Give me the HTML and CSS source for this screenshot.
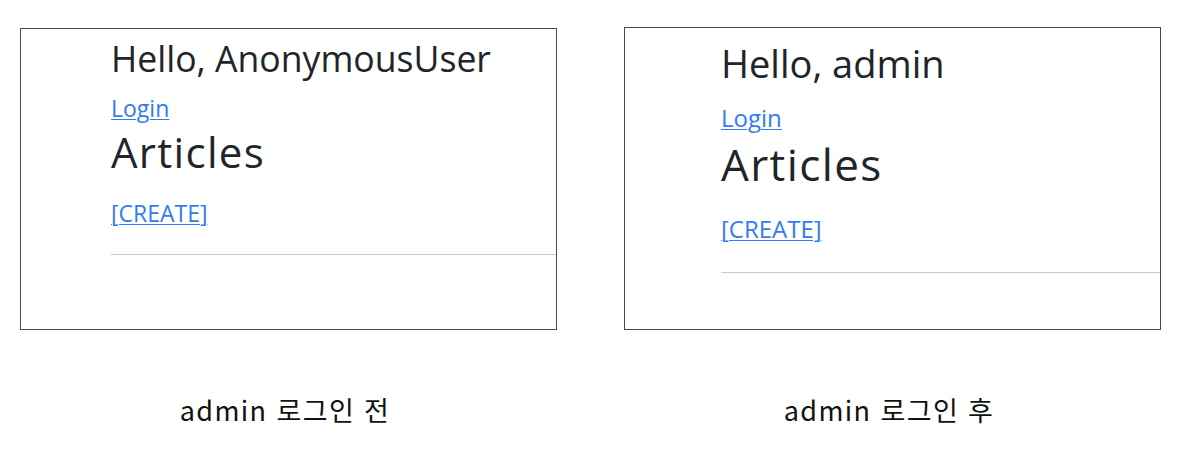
FILE: index.html
```html
<!DOCTYPE html>
<html lang="ko">
<head>
<meta charset="utf-8">
<title>admin login</title>
<link rel="stylesheet" href="styles.css">
</head>
<body>
<div class="page">
  <section class="shot shot-before">
    <div class="frame">
      <div class="content">
        <div class="hello">Hello, AnonymousUser</div>
        <a class="link login" href="#">Login</a>
        <h1 class="title">Articles</h1>
        <a class="link create" href="#">[CREATE]</a>
        <hr class="rule">
      </div>
    </div>
    <p class="caption">admin 로그인 전</p>
  </section>
  <section class="shot shot-after">
    <div class="frame">
      <div class="content">
        <div class="hello">Hello, admin</div>
        <a class="link login" href="#">Login</a>
        <h1 class="title">Articles</h1>
        <a class="link create" href="#">[CREATE]</a>
        <hr class="rule">
      </div>
    </div>
    <p class="caption">admin 로그인 후</p>
  </section>
</div>
</body>
</html>
```

FILE: styles.css
```css
html, body {
  margin: 0;
  padding: 0;
  background: #ffffff;
}

.page {
  display: flex;
  gap: 67px;
  padding: 28px 0 0 20px;
}

.shot {
  width: 537px;
  display: flex;
  flex-direction: column;
}

.frame {
  height: 300px;
  border: 1px solid #4a4a4a;
  overflow: hidden;
  font-family: "Open Sans", "Noto Sans", sans-serif;
  color: #212529;
}

.content {
  display: flex;
  flex-direction: column;
  align-items: flex-start;
  padding: 7px 0 0 90px;
}

.hello {
  font-size: 35.6px;
  line-height: 44px;
  margin-bottom: 13px;
}

.link {
  color: #2f7cf3;
  text-decoration: underline;
  text-underline-offset: 2px;
  text-decoration-thickness: 1px;
  font-size: 23px;
  line-height: 30px;
}

.title {
  font-size: 42px;
  line-height: 48px;
  letter-spacing: 1.3px;
  font-weight: 400;
  margin: 5px 0 22px;
}

.rule {
  align-self: stretch;
  border: 0;
  border-top: 1px solid #c8c8c8;
  margin: 26px 0 0;
  height: 0;
}

.caption {
  margin: 63px 0 0;
  padding-right: 7px;
  text-align: center;
  font-family: "Noto Sans CJK KR", "Noto Sans", sans-serif;
  font-size: 27px;
  line-height: 34px;
  letter-spacing: 1.4px;
  color: #111111;
}

.shot-after .frame {
  margin-top: -1px;
  height: 301px;
}

.shot-after .content {
  padding: 12px 0 0 96px;
}

.shot-after .hello {
  font-size: 38px;
  line-height: 46px;
  margin-bottom: 16px;
}

.shot-after .link {
  font-size: 24px;
  line-height: 32px;
}

.shot-after .title {
  font-size: 44px;
  line-height: 50px;
  letter-spacing: 1.4px;
  margin: 5px 0 24px;
}

.shot-after .rule {
  margin-top: 27px;
}
```
